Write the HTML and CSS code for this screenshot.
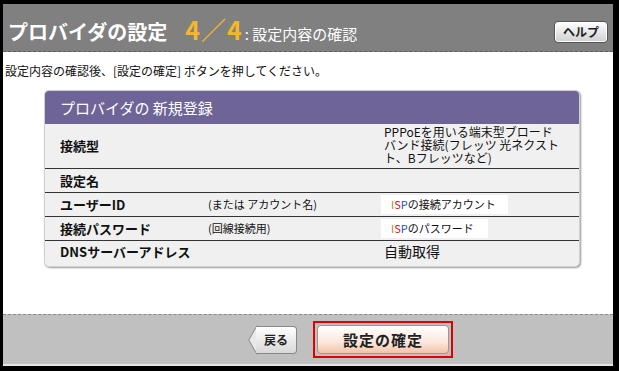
FILE: index.html
```html
<!DOCTYPE HTML><html>
<head>
	<meta charset="UTF-8" name="viewport" content="width=device-width, initial-scale=1">
	<title>プロバイダの設定</title>
	<link rel="stylesheet" href="styles.css">
</head>
<body>
<div class="frame">
	<div class="topbar">
		<div class="title">
			<b>プロバイダの設定</b>
			<span class="step">4／4</span>
			<span class="sub">: 設定内容の確認</span>
		</div>
		<span class="help">ヘルプ</span>
	</div>

	<div class="content">
		<p class="lead">設定内容の確認後、[設定の確定] ボタンを押してください。</p>

		<div class="panel">
			<div class="panel-head">プロバイダの 新規登録</div>
			<table class="info">
				<tr class="tall">
					<th>接続型</th>
					<td></td>
					<td class="val small">PPPoEを用いる端末型ブロード<br>バンド接続(フレッツ 光ネクスト<br>ト、Bフレッツなど)</td>
				</tr>
				<tr>
					<th>設定名</th>
					<td></td>
					<td></td>
				</tr>
				<tr>
					<th>ユーザーID</th>
					<td class="note">(または アカウント名)</td>
					<td><span class="box w1"><i class="c1">I</i><i class="c2">S</i><i class="c3">P</i>の接続アカウント</span></td>
				</tr>
				<tr>
					<th>接続パスワード</th>
					<td class="note">(回線接続用)</td>
					<td><span class="box w2"><i class="c1">I</i><i class="c2">S</i><i class="c3">P</i>のパスワード</span></td>
				</tr>
				<tr class="last">
					<th>DNSサーバーアドレス</th>
					<td></td>
					<td class="val">自動取得</td>
				</tr>
			</table>
		</div>
	</div>

	<div class="footer">
		<span class="back">
			<svg width="9" height="30" viewBox="0 0 9 30"><polygon points="9,0.5 0.8,15 9,29.5" fill="#e8e8e8" stroke="#888" stroke-width="1"/></svg>
			<span class="back-body">戻る</span>
		</span>
		<span class="confirm"><span class="confirm-btn">設定の確定</span></span>
	</div>
</div>
</body>
</html>
```

FILE: styles.css
```css
html {
	font-family: "Noto Sans CJK JP", "Noto Sans", sans-serif;
}
body {
	margin: 0;
	background-color: #000;
}
.frame {
	width: 610px;
	height: 362px;
	border-style: solid;
	border-color: #000;
	border-width: 4px 6px 5px 3px;
	display: flex;
	flex-direction: column;
	background-color: #fff;
}
.topbar {
	height: 47px;
	background-color: #808080;
	border-bottom: 1px dashed #5c5c5c;
	display: flex;
	align-items: flex-end;
	justify-content: space-between;
	padding: 0 5px 0 5px;
}
.title {
	color: #fff;
	display: flex;
	align-items: baseline;
	padding-bottom: 4px;
	white-space: nowrap;
}
.title b {
	font-size: 20px;
}
.step {
	color: #f5b72a;
	font-size: 25px;
	font-weight: bold;
	margin-left: 18px;
	letter-spacing: 1px;
}
.sub {
	font-size: 15px;
	margin-left: 2px;
}
.help {
	margin-bottom: 8px;
	width: 52px;
	height: 20px;
	border: 1px solid #555;
	border-radius: 4px;
	background: linear-gradient(#ffffff, #d0d0d0);
	font-size: 12px;
	font-weight: bold;
	color: #222;
	text-align: center;
	line-height: 20px;
	box-shadow: inset 0 0 0 1px #fff;
}
.content {
	flex: 1;
	padding: 0 0 0 2px;
}
.lead {
	margin: 11px 0 0 0;
	font-size: 12px;
	line-height: 16px;
	color: #111;
}
.panel {
	margin: 11px 0 0 39px;
	width: 534px;
	background-color: #f0f0f0;
	border-radius: 5px;
	border: 1px solid #d0d0d0;
	box-shadow: 1px 1px 2px #999;
	overflow: hidden;
	padding-bottom: 4px;
}
.panel-head {
	height: 33px;
	background-color: #6e6498;
	color: #fff;
	font-size: 15px;
	line-height: 33px;
	padding-left: 15px;
}
.info {
	width: 100%;
	border-collapse: collapse;
}
.info th {
	text-align: left;
	font-size: 13px;
	font-weight: bold;
	color: #111;
	padding: 0 0 0 15px;
	width: 148px;
	white-space: nowrap;
}
.info td {
	padding: 0;
	font-size: 11px;
	color: #111;
}
.info tr {
	height: 24px;
	border-bottom: 1px solid #333;
}
.info tr.tall {
	height: 44px;
}
.info tr.last {
	border-bottom: none;
	height: 22px;
}
.note {
	width: 173px;
}
.val {
	font-size: 14px !important;
	padding-left: 3px !important;
}
.val.small {
	font-size: 12px !important;
	line-height: 13px;
	padding-top: 1px !important;
	vertical-align: top;
	white-space: nowrap;
}
.box {
	display: inline-block;
	background-color: #fff;
	height: 19px;
	line-height: 19px;
	padding-left: 10px;
	font-size: 11px;
}
.w1 { width: 117px; }
.w2 { width: 97px; }
.box i {
	font-style: normal;
}
.c1 { color: #e07a10; }
.c2 { color: #d02020; }
.c3 { color: #2050c0; }
.footer {
	height: 49px;
	background-color: #c0c0c0;
	border-top: 1px dashed #8a8a8a;
	border-bottom: 2px solid #e6e6e6;
	display: flex;
	align-items: center;
	padding-left: 245px;
}
.back {
	display: flex;
	align-items: center;
	margin-top: 1px;
}
.back svg {
	margin-right: -1px;
}
.back-body {
	height: 26px;
	width: 40px;
	border: 1px solid #888;
	border-left: none;
	border-radius: 0 4px 4px 0;
	background: linear-gradient(#ffffff, #d8d8d8);
	font-size: 12px;
	font-weight: bold;
	line-height: 26px;
	text-align: center;
	color: #222;
}
.confirm {
	margin-left: 16px;
	border: 2px solid #e00000;
	padding: 2px;
	display: flex;
}
.confirm-btn {
	width: 130px;
	height: 27px;
	border: 1px solid #999;
	border-radius: 4px;
	background: linear-gradient(#ffffff, #fbe7dc 60%, #f2c3a8);
	font-size: 15px;
	font-weight: bold;
	color: #222;
	line-height: 27px;
	text-align: center;
	letter-spacing: 1px;
}
```
